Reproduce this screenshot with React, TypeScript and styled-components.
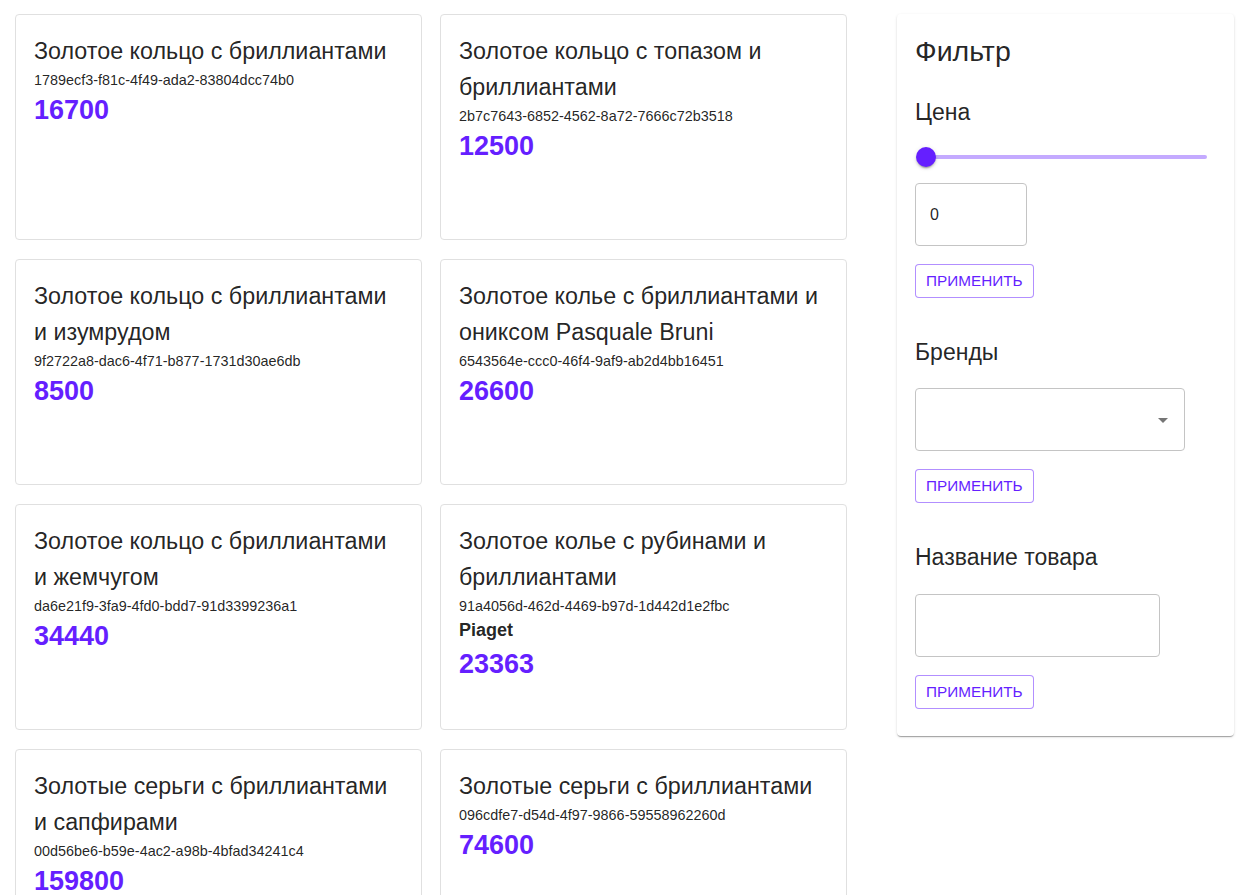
import { FC } from "react";
import styled, { createGlobalStyle } from "styled-components";

const purple = "#651fff";

const GlobalStyle = createGlobalStyle`
  body {
    margin: 0;
    background: #fff;
    font-family: "Liberation Sans", Arial, sans-serif;
    color: rgba(0, 0, 0, 0.87);
  }
`;

const Page = styled.div`
  display: flex;
  align-items: flex-start;
  gap: 50px;
  padding: 14px 0 0 15px;
`;

const Grid = styled.div`
  display: grid;
  grid-template-columns: 407px 407px;
  grid-auto-rows: 226px;
  column-gap: 18px;
  row-gap: 19px;
`;

const Card = styled.div`
  box-sizing: border-box;
  border: 1px solid #e0e0e0;
  border-radius: 4px;
  padding: 18px 18px;
  overflow: hidden;
`;

const Title = styled.div`
  font-size: 23.3px;
  line-height: 36px;
`;

const Id = styled.div`
  font-size: 14.4px;
  line-height: 20px;
  margin-top: 1px;
`;

const Brand = styled.div`
  font-size: 18px;
  font-weight: 700;
  line-height: 28px;
`;

const Price = styled.div`
  font-size: 27px;
  font-weight: 700;
  line-height: 40px;
  color: ${purple};
`;

const Panel = styled.div`
  box-sizing: border-box;
  width: 337px;
  padding: 18px 18px 27px;
  border-radius: 4px;
  box-shadow: 0px 2px 1px -1px rgba(0, 0, 0, 0.2), 0px 1px 1px 0px rgba(0, 0, 0, 0.14),
    0px 1px 3px 0px rgba(0, 0, 0, 0.12);
`;

const PanelTitle = styled.div`
  font-size: 28.5px;
  line-height: 38px;
`;

const Section = styled.div<{ $top: number }>`
  margin-top: ${(p) => p.$top}px;
  display: flex;
  flex-direction: column;
  align-items: flex-start;
`;

const Label = styled.div`
  font-size: 23px;
  line-height: 32px;
`;

const Slider = styled.div`
  position: relative;
  box-sizing: border-box;
  width: 292px;
  height: 20px;
  margin-top: 19px;
  padding-left: 11px;
  display: flex;
  align-items: center;
`;

const Rail = styled.div`
  flex: 1;
  height: 4px;
  border-radius: 2px;
  background: ${purple};
  opacity: 0.38;
`;

const Thumb = styled.div`
  position: absolute;
  left: 1px;
  top: 0;
  width: 20px;
  height: 20px;
  border-radius: 50%;
  background: ${purple};
  box-shadow: 0px 3px 1px -2px rgba(0, 0, 0, 0.2), 0px 2px 2px 0px rgba(0, 0, 0, 0.14),
    0px 1px 5px 0px rgba(0, 0, 0, 0.12);
`;

const Field = styled.div<{ $w: number; $mt: number }>`
  position: relative;
  box-sizing: border-box;
  width: ${(p) => p.$w}px;
  height: 63px;
  margin-top: ${(p) => p.$mt}px;
  border: 1px solid #c4c4c4;
  border-radius: 4px;
  display: flex;
  align-items: center;
  padding: 0 14px;
  font-size: 16px;
`;

const Arrow = styled.svg`
  position: absolute;
  right: 9px;
  top: 50%;
  margin-top: -12px;
  width: 24px;
  height: 24px;
  fill: #757575;
`;

const Button = styled.button`
  box-sizing: border-box;
  margin-top: 18px;
  height: 34px;
  padding: 0 10px;
  border: 1px solid rgba(101, 31, 255, 0.5);
  border-radius: 4px;
  background: #fff;
  color: ${purple};
  font-family: "Liberation Sans", Arial, sans-serif;
  font-size: 15.3px;
  text-transform: uppercase;
`;

type Item = { title: string; id: string; price: number; brand?: string };

const items: Item[] = [
  { title: "Золотое кольцо с бриллиантами", id: "1789ecf3-f81c-4f49-ada2-83804dcc74b0", price: 16700 },
  { title: "Золотое кольцо с топазом и бриллиантами", id: "2b7c7643-6852-4562-8a72-7666c72b3518", price: 12500 },
  { title: "Золотое кольцо с бриллиантами и изумрудом", id: "9f2722a8-dac6-4f71-b877-1731d30ae6db", price: 8500 },
  { title: "Золотое колье с бриллиантами и ониксом Pasquale Bruni", id: "6543564e-ccc0-46f4-9af9-ab2d4bb16451", price: 26600 },
  { title: "Золотое кольцо с бриллиантами и жемчугом", id: "da6e21f9-3fa9-4fd0-bdd7-91d3399236a1", price: 34440 },
  { title: "Золотое колье с рубинами и бриллиантами", id: "91a4056d-462d-4469-b97d-1d442d1e2fbc", price: 23363, brand: "Piaget" },
  { title: "Золотые серьги с бриллиантами и сапфирами", id: "00d56be6-b59e-4ac2-a98b-4bfad34241c4", price: 159800 },
  { title: "Золотые серьги с бриллиантами", id: "096cdfe7-d54d-4f97-9866-59558962260d", price: 74600 },
];

const App: FC = () => {
  return (
    <>
      <GlobalStyle />
      <Page>
        <Grid>
          {items.map((item) => (
            <Card key={item.id}>
              <Title>{item.title}</Title>
              <Id>{item.id}</Id>
              {item.brand && <Brand>{item.brand}</Brand>}
              <Price>{item.price}</Price>
            </Card>
          ))}
        </Grid>
        <Panel>
          <PanelTitle>Фильтр</PanelTitle>
          <Section $top={26}>
            <Label>Цена</Label>
            <Slider>
              <Rail />
              <Thumb />
            </Slider>
            <Field $w={112} $mt={16}>0</Field>
            <Button>Применить</Button>
          </Section>
          <Section $top={38}>
            <Label>Бренды</Label>
            <Field $w={270} $mt={20}>
              <Arrow viewBox="0 0 24 24">
                <path d="M7 10l5 5 5-5z" />
              </Arrow>
            </Field>
            <Button>Применить</Button>
          </Section>
          <Section $top={38}>
            <Label>Название товара</Label>
            <Field $w={245} $mt={21} />
            <Button>Применить</Button>
          </Section>
        </Panel>
      </Page>
    </>
  );
};

export default App;
